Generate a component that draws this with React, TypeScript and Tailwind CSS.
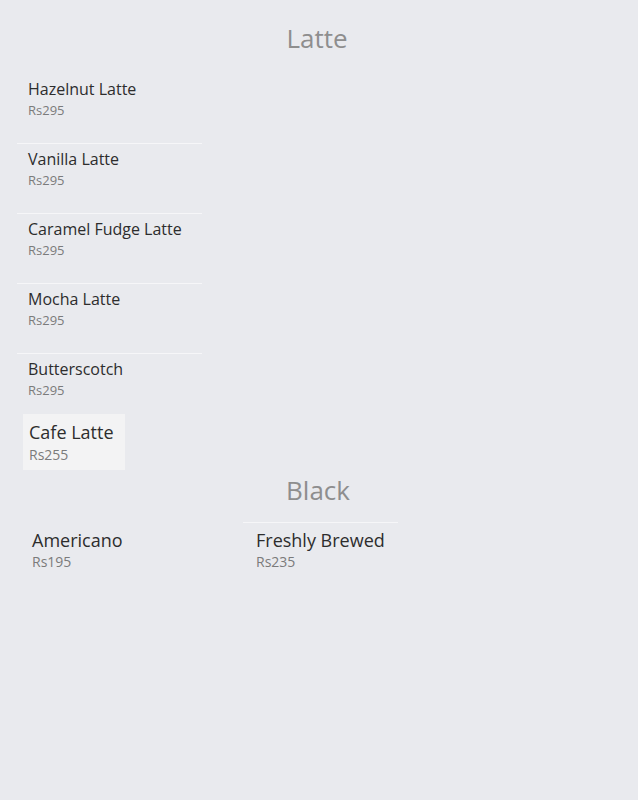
import React from "react";

type Item = { name: string; price: number };

const latte: Item[] = [
  { name: "Hazelnut Latte", price: 295 },
  { name: "Vanilla Latte", price: 295 },
  { name: "Caramel Fudge Latte", price: 295 },
  { name: "Mocha Latte", price: 295 },
];

function SmallItem({ item, first, last }: { item: Item; first?: boolean; last?: boolean }) {
  return (
    <div
      className={`w-[185px] border-t pl-[11px] pt-[5px] ${first ? "border-transparent" : "border-[#f6f6f8]"} ${last ? "pb-[15px]" : "pb-[24px]"}`}
    >
      <div className="text-[16px] leading-5 text-[#2d2d2d]">{item.name}</div>
      <div className="mt-[2px] text-[13px] leading-[18px] text-[#7b7b7b]">Rs{item.price}</div>
    </div>
  );
}

function BigItem({ item, divider }: { item: Item; divider?: boolean }) {
  return (
    <div className={`w-[155px] border-t pl-[13px] pt-[6px] ${divider ? "border-[#f6f6f8]" : "border-transparent"}`}>
      <div className="text-[18px] leading-[22px] text-[#2d2d2d]">{item.name}</div>
      <div className="mt-[2px] text-[14px] leading-[18px] text-[#7b7b7b]">Rs{item.price}</div>
    </div>
  );
}

export default function App() {
  return (
    <div className="min-h-[800px] w-full bg-[#e9eaee] font-['Open_Sans',sans-serif]">
      {/* Latte */}
      <h2 className="pr-[4px] pt-[22px] text-center text-[26px] leading-8 text-[#8e8e8e]">Latte</h2>
      <div className="mt-[19px] flex flex-col pl-[17px]">
        {latte.map((it, i) => (
          <SmallItem key={it.name} item={it} first={i === 0} />
        ))}
        <SmallItem item={{ name: "Butterscotch", price: 295 }} last />
        <div className="ml-[6px] w-[102px] bg-[#f3f3f4] px-[6px] pb-[6px] pt-[7px]">
          <div className="text-[18px] leading-[22px] text-[#2d2d2d]">Cafe Latte</div>
          <div className="mt-[3px] text-[14px] leading-[18px] text-[#7b7b7b]">Rs255</div>
        </div>
      </div>

      {/* Black */}
      <h2 className="mt-[4px] pr-[2px] text-center text-[26px] leading-8 text-[#8e8e8e]">Black</h2>
      <div className="mt-[16px] flex pl-[19px]">
        <BigItem item={{ name: "Americano", price: 195 }} />
        <div className="ml-[69px]">
          <BigItem item={{ name: "Freshly Brewed", price: 235 }} divider />
        </div>
      </div>
    </div>
  );
}
